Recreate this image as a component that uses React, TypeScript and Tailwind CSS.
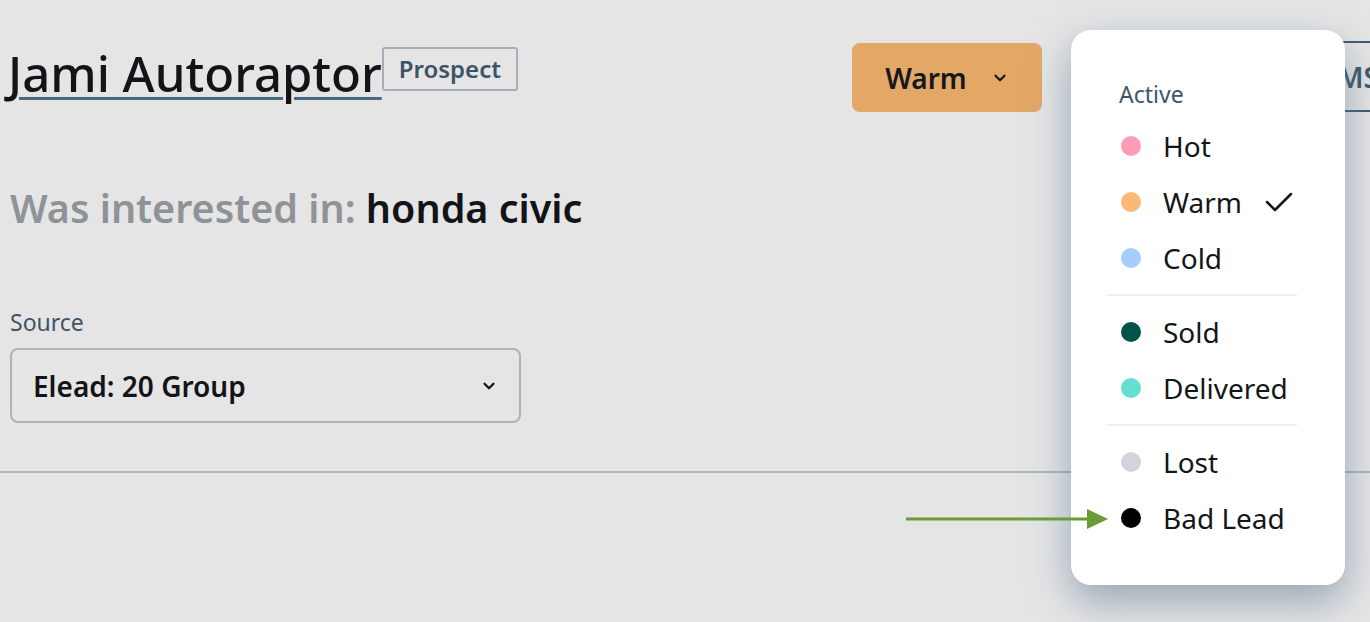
import { ChevronDown } from "lucide-react";

const groups = [
  [
    { label: "Hot", color: "bg-[#fc9cb6]" },
    { label: "Warm", color: "bg-[#fdb877]", checked: true },
    { label: "Cold", color: "bg-[#a6cdfb]" },
  ],
  [
    { label: "Sold", color: "bg-[#03524a]" },
    { label: "Delivered", color: "bg-[#66ded1]" },
  ],
  [
    { label: "Lost", color: "bg-[#d1d5db]" },
    { label: "Bad Lead", color: "bg-black" },
  ],
];

function StatusMenu() {
  return (
    <div className="absolute left-[1071px] top-[30px] w-[274px] h-[555px] rounded-[20px] bg-white shadow-[0_16px_40px_rgba(96,125,150,0.6)] pl-[36px] pr-[48px] pt-[52px]">
      <div className="pl-[12px] text-[23px] leading-[24px] text-[#3e5568] mb-[12px]">Active</div>
      {groups.map((group, gi) => (
        <div key={gi}>
          {gi > 0 && <div className="h-[2px] bg-[#eceef0] my-[8px]" />}
          {group.map((item) => (
            <div key={item.label} className="flex items-center h-[56px] pl-[14px] pr-[4px]">
              <span className={`w-[20px] h-[20px] rounded-full shrink-0 ${item.color}`} />
              <span className="ml-[22px] text-[28px] leading-[34px] text-[#131619]">{item.label}</span>
              {item.checked && (
                <svg className="ml-auto" width="28" height="20" viewBox="0 0 28 20" fill="none">
                  <polyline points="2,10 10,18 26,2" stroke="#131619" strokeWidth="2.5" strokeLinecap="round" strokeLinejoin="round" />
                </svg>
              )}
            </div>
          ))}
        </div>
      ))}
    </div>
  );
}

export default function App() {
  return (
    <div className="relative min-h-screen w-full overflow-hidden bg-[#e5e5e5] font-['Noto_Sans',sans-serif]">
      {/* Header */}
      <div className="flex items-start pt-[43px] pl-2">
        <div className="flex items-start w-[844px] shrink-0">
          <h1 className="text-[49px] leading-[60px] font-medium text-[#121417] underline decoration-[#4b6882] decoration-[3px] underline-offset-[5px]">
            Jami Autoraptor
          </h1>
          <span className="mt-[4px] h-[44px] px-[15px] flex items-center border-2 border-[#a3b0bb] rounded-[3px] text-[24px] font-semibold text-[#3d5466]">
            Prospect
          </span>
        </div>
        <button className="shrink-0 w-[190px] h-[69px] rounded-[8px] bg-[#e3a766] flex items-center justify-center gap-[24px] text-[28px] font-semibold text-[#16191c]">
          Warm
          <ChevronDown size={18} strokeWidth={3} />
        </button>
        <button className="shrink-0 ml-[254px] h-[71px] -mt-[2px] px-[24px] border-2 border-[#3f5a6e] rounded-[6px] text-[28px] font-semibold text-[#3d5466]">
          SMS
        </button>
      </div>

      <div className="pl-[10px] mt-[71px] text-[39.5px] leading-[50px] font-semibold">
        <span className="text-[#8e9398]">Was interested in: </span>
        <span className="text-[#121417]">honda civic</span>
      </div>

      <div className="pl-[10px] mt-[74px]">
        <div className="text-[23px] leading-[30px] text-[#3e5568]">Source</div>
        <div className="mt-[11px] w-[511px] h-[75px] border-2 border-[#a9b4bd] rounded-[8px] flex items-center justify-between pl-[21px] pr-[21px]">
          <span className="text-[28px] font-semibold text-[#121417]">Elead: 20 Group</span>
          <ChevronDown size={18} strokeWidth={3} className="text-[#121417]" />
        </div>
      </div>

      <div className="mt-[48px] border-t-2 border-[#aab6c0]" />

      <StatusMenu />

      {/* annotation arrow */}
      <svg className="absolute left-[900px] top-[505px]" width="212" height="30" viewBox="0 0 212 30">
        <line x1="6" y1="14" x2="190" y2="14" stroke="#6b9b37" strokeWidth="3" />
        <polygon points="187,4 208,14 187,24" fill="#6b9b37" />
      </svg>
    </div>
  );
}
